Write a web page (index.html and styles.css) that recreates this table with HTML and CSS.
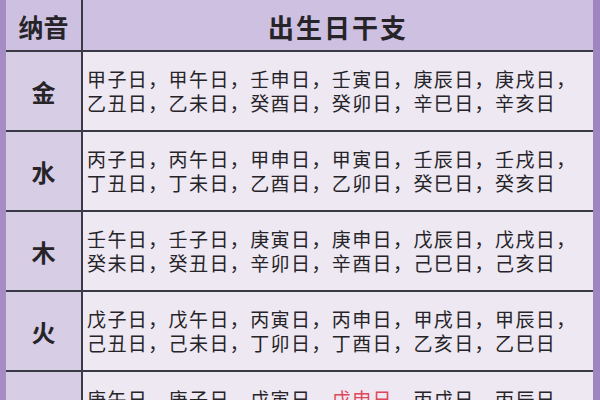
FILE: index.html
```html
<!DOCTYPE html>
<html lang="zh-CN">
<head>
<meta charset="utf-8">
<link rel="stylesheet" href="styles.css">
</head>
<body>
<div class="frame">
  <div class="grid">
    <div class="cell head left">纳音</div>
    <div class="cell head right">出生日干支</div>

    <div class="cell side">金</div>
    <div class="cell days">
      <div>甲子日，甲午日，壬申日，壬寅日，庚辰日，庚戌日，</div>
      <div>乙丑日，乙未日，癸酉日，癸卯日，辛巳日，辛亥日</div>
    </div>

    <div class="cell side">水</div>
    <div class="cell days">
      <div>丙子日，丙午日，甲申日，甲寅日，壬辰日，壬戌日，</div>
      <div>丁丑日，丁未日，乙酉日，乙卯日，癸巳日，癸亥日</div>
    </div>

    <div class="cell side">木</div>
    <div class="cell days">
      <div>壬午日，壬子日，庚寅日，庚申日，戊辰日，戊戌日，</div>
      <div>癸未日，癸丑日，辛卯日，辛酉日，己巳日，己亥日</div>
    </div>

    <div class="cell side">火</div>
    <div class="cell days">
      <div>戊子日，戊午日，丙寅日，丙申日，甲戌日，甲辰日，</div>
      <div>己丑日，己未日，丁卯日，丁酉日，乙亥日，乙巳日</div>
    </div>

    <div class="cell side red">土</div>
    <div class="cell days">
      <div>庚午日，庚子日，戊寅日，<span class="red">戊申日</span>，丙戌日，丙辰日，</div>
      <div>辛未日，辛丑日，己卯日，己酉日，丁亥日，丁巳日</div>
    </div>
  </div>
</div>
</body>
</html>
```

FILE: styles.css
```css
html, body {
  margin: 0;
  padding: 0;
  background: #ece7f1;
}
body {
  width: 600px;
  height: 400px;
  overflow: hidden;
  font-family: "Noto Sans CJK SC", "Noto Sans", sans-serif;
  color: #262428;
}
.frame {
  width: 600px;
  height: 400px;
  box-sizing: border-box;
  border-left: 6px solid #a58cc5;
  border-right: 7px solid #9f86c0;
  overflow: hidden;
}
.grid {
  display: grid;
  grid-template-columns: 75px 1fr;
  grid-template-rows: 50px repeat(5, 78px);
  gap: 2px;
  background: #3a3a46;
}
.cell {
  display: flex;
  align-items: center;
}
.head {
  background: #cdc0e0;
  font-weight: bold;
  justify-content: center;
}
.head.left {
  font-size: 25px;
  padding-top: 2px;
}
.head.right {
  font-size: 26px;
  letter-spacing: 2px;
  padding-top: 2px;
}
.side {
  background: #d7cde5;
  justify-content: center;
  font-size: 24px;
  font-weight: bold;
}
.days {
  background: #ede8f2;
  flex-direction: column;
  align-items: flex-start;
  justify-content: center;
  padding-left: 4px;
  font-size: 19px;
  line-height: 24px;
  letter-spacing: 1.4px;
}
.days div {
  white-space: nowrap;
}
.red {
  color: #e0465a;
}
```
